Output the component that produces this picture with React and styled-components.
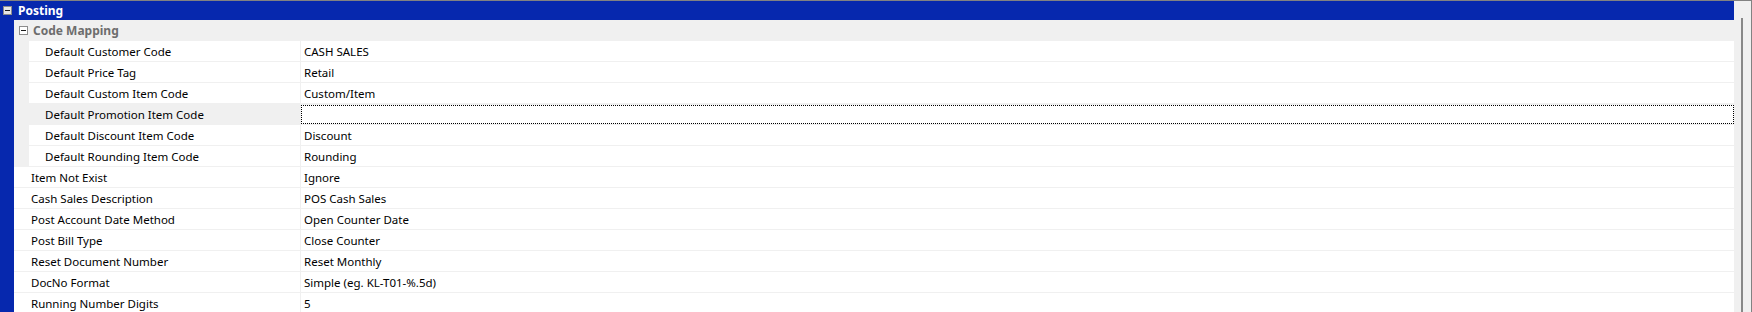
import React from "react";
import styled, { createGlobalStyle } from "styled-components";

const GlobalStyle = createGlobalStyle`
    html, body {
        margin: 0;
        padding: 0;
        background: #ffffff;
    }
    body {
        font-family: "Noto Sans", "Liberation Sans", sans-serif;
        font-size: 11.5px;
        color: #000000;
    }
`;

const Frame = styled.div`
    width: 1752px;
    height: 312px;
    box-sizing: border-box;
    border-top: 1px solid #828282;
    border-right: 1px solid #828282;
    display: flex;
    overflow: hidden;
`;

const Grid = styled.div`
    flex: 1;
    display: flex;
    flex-direction: column;
    min-width: 0;
`;

const Header = styled.div`
    height: 19px;
    background: #0628ae;
    display: flex;
    align-items: center;
    padding-left: 3px;
    gap: 6px;
    color: #ffffff;
    font-weight: bold;
    font-size: 12px;
    flex-shrink: 0;
`;

const Body = styled.div`
    flex: 1;
    display: flex;
`;

const Gutter = styled.div`
    width: 14px;
    background: #0628ae;
    flex-shrink: 0;
`;

const Rows = styled.div`
    flex: 1;
    display: flex;
    flex-direction: column;
`;

const CategoryRow = styled.div`
    height: 20px;
    border-bottom: 1px solid #f0f0f0;
    background: #f0f0f0;
    display: flex;
    align-items: center;
    padding-left: 5px;
    gap: 5px;
    color: #6d6d6d;
    font-weight: bold;
    font-size: 12px;
    flex-shrink: 0;
`;

const Toggle = styled.span`
    width: 7px;
    height: 7px;
    border: 1px solid #8c8c8c;
    background: ${(p) => (p.$light ? "#e6e6e6" : "#ffffff")};
    position: relative;
    flex-shrink: 0;
    &::after {
        content: "";
        position: absolute;
        left: 1px;
        right: 1px;
        top: 3px;
        height: 1px;
        background: #1a1a1a;
    }
`;

const Row = styled.div`
    height: 20px;
    display: flex;
    flex-shrink: 0;
    border-bottom: ${(p) => (p.$last ? "none" : "1px solid #f0f0f0")};
    background: ${(p) => (p.$nested ? "#f0f0f0" : "#ffffff")};
`;

const Label = styled.div`
    width: ${(p) => (p.$nested ? "272px" : "287px")};
    margin-left: ${(p) => (p.$nested ? "15px" : "0")};
    box-sizing: border-box;
    padding-left: ${(p) => (p.$nested ? "16px" : "17px")};
    background: ${(p) => (p.$selected ? "#f0f0f0" : "#ffffff")};
    border-right: 1px solid #f0f0f0;
    display: flex;
    align-items: center;
    white-space: nowrap;
    flex-shrink: 0;
`;

const Value = styled.div`
    flex: 1;
    background: #ffffff;
    box-sizing: border-box;
    padding-left: 2px;
    display: flex;
    align-items: center;
    white-space: nowrap;
    border: ${(p) => (p.$focused ? "1px dotted #000000" : "1px solid transparent")};
    margin-top: ${(p) => (p.$focused ? "1px" : "0")};
    height: ${(p) => (p.$focused ? "19px" : "20px")};
`;

const Scrollbar = styled.div`
    width: 17px;
    background: #f0f0f0;
    display: flex;
    justify-content: center;
    padding-top: 17px;
    box-sizing: border-box;
    flex-shrink: 0;
`;

const Thumb = styled.div`
    width: 2px;
    height: 100%;
    background: #888888;
    margin-right: 1px;
`;

const nested = [
    ["Default Customer Code", "CASH SALES"],
    ["Default Price Tag", "Retail"],
    ["Default Custom Item Code", "Custom/Item"],
    ["Default Promotion Item Code", "", true],
    ["Default Discount Item Code", "Discount"],
    ["Default Rounding Item Code", "Rounding"],
];

const topLevel = [
    ["Item Not Exist", "Ignore"],
    ["Cash Sales Description", "POS Cash Sales"],
    ["Post Account Date Method", "Open Counter Date"],
    ["Post Bill Type", "Close Counter"],
    ["Reset Document Number", "Reset Monthly"],
    ["DocNo Format", "Simple (eg. KL-T01-%.5d)"],
    ["Running Number Digits", "5"],
];

export default function App() {
    return (
        <>
            <GlobalStyle />
            <Frame>
                <Grid>
                    <Header>
                        <Toggle $light />
                        <span>Posting</span>
                    </Header>
                    <Body>
                        <Gutter />
                        <Rows>
                            <CategoryRow>
                                <Toggle />
                                <span>Code Mapping</span>
                            </CategoryRow>
                            {nested.map(([label, value, selected]) => (
                                <Row key={label} $nested>
                                    <Label $nested $selected={selected}>
                                        {label}
                                    </Label>
                                    <Value $focused={selected}>{value}</Value>
                                </Row>
                            ))}
                            {topLevel.map(([label, value], i) => (
                                <Row key={label} $last={i === topLevel.length - 1}>
                                    <Label>{label}</Label>
                                    <Value>{value}</Value>
                                </Row>
                            ))}
                        </Rows>
                    </Body>
                </Grid>
                <Scrollbar>
                    <Thumb />
                </Scrollbar>
            </Frame>
        </>
    );
}
